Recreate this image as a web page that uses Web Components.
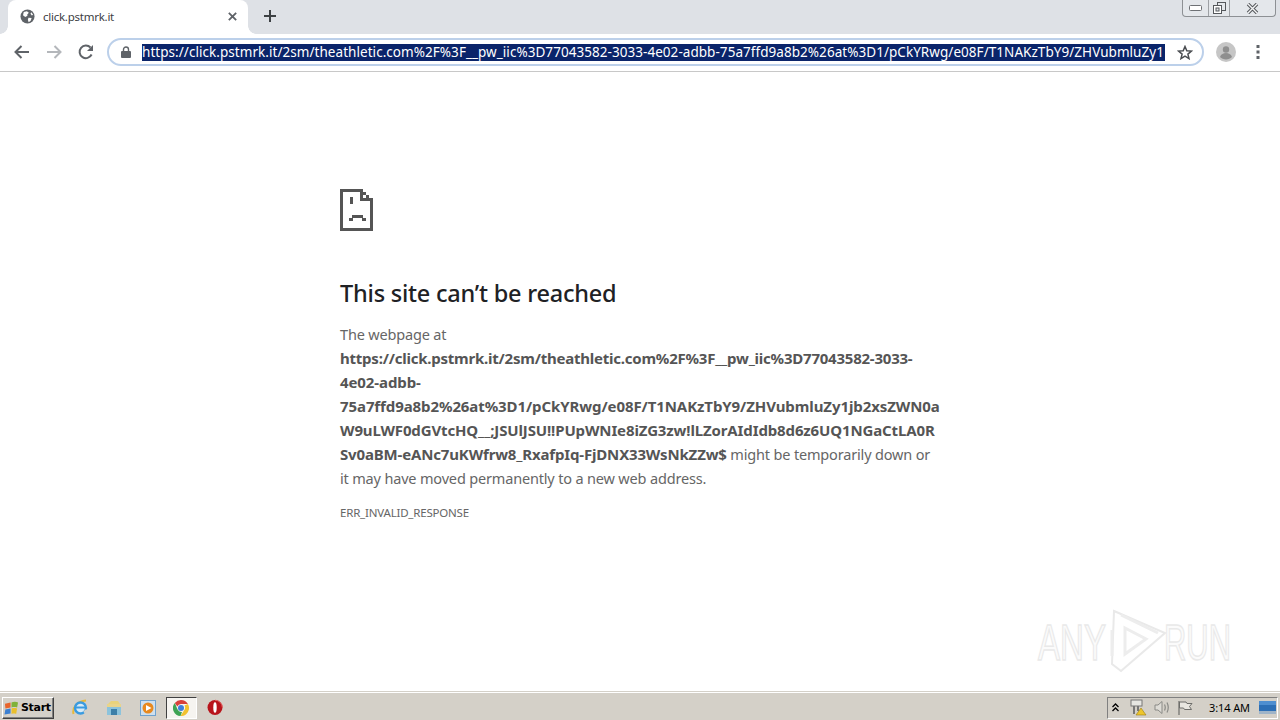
<!DOCTYPE html>
<html>
<head>
<meta charset="utf-8">
<title>click.pstmrk.it</title>
<style>
  html, body { margin: 0; height: 100%; background: #fff; }
  body { display: flex; flex-direction: column; height: 720px; overflow: hidden; font-family: "Noto Sans", "Open Sans", sans-serif; position: relative; }
</style>
</head>
<body>
<tab-strip title-text="click.pstmrk.it"></tab-strip>
<omni-toolbar url="https://click.pstmrk.it/2sm/theathletic.com%2F%3F__pw_iic%3D77043582-3033-4e02-adbb-75a7ffd9a8b2%26at%3D1/pCkYRwg/e08F/T1NAKzTbY9/ZHVubmluZy1"></omni-toolbar>
<error-page>
  <span slot="title">This site can’t be reached</span>
  <span slot="code">ERR_INVALID_RESPONSE</span>
</error-page>
<win-taskbar></win-taskbar>
<run-watermark></run-watermark>

<script>
  class TabStrip extends HTMLElement {
    constructor() {
      super();
      this.attachShadow({ mode: "open" });
      this.shadowRoot.innerHTML = `
        <style>
          :host { display: flex; height: 34px; background: #dee1e6; padding-left: 8px; flex: none; }
          .tab { position: relative; width: 240px; height: 34px; background: #fff; border-radius: 8px 8px 0 0; display: flex; align-items: center; padding: 0 10px 2px 12px; box-sizing: border-box; }
          .tab::before, .tab::after { content: ""; position: absolute; bottom: 0; width: 8px; height: 8px; }
          .tab::before { left: -8px; background: radial-gradient(circle at 0 0, transparent 7.5px, #fff 8px); }
          .tab::after { right: -8px; background: radial-gradient(circle at 100% 0, transparent 7.5px, #fff 8px); }
          .tab svg.globe { margin-right: 8px; flex: none; }
          .name { flex: 1; font: 11.5px "Noto Sans", sans-serif; color: #3c4043; letter-spacing: -.25px; }
          .add { margin: 0 0 2px 15px; align-self: center; display: flex; }
          .spacer { flex: 1; }
          .caption { display: flex; align-self: flex-start; height: 16px; margin-right: 4px; border: 1px solid #8d9094; border-top: 0; border-radius: 0 0 4px 4px; background: #e4e7eb; }
          .caption div { display: flex; align-items: center; justify-content: center; border-left: 1px solid #9ea1a5; }
          .caption div:first-child { border-left: 0; width: 25px; }
          .caption div:nth-child(2) { width: 20px; }
          .caption div:nth-child(3) { width: 45px; }
        </style>
        <div class="tab">
          <svg class="globe" width="15" height="15" viewBox="0 0 16 16"><circle cx="8" cy="8" r="7.5" fill="#5f6368"/><path d="M4 3.2 7.4 2.4 9.4 4 7.6 6 8 7.2 5.6 8.6 3.2 6.6ZM9 9.2 12.4 9.6 11.4 12.6 9.2 14 8.4 11.4Z" fill="#fff"/><path d="M12 3.5 14 6 12.6 6.8 11.2 5Z" fill="#fff"/></svg>
          <span class="name">${this.getAttribute("title-text")}</span>
          <svg width="11" height="11" viewBox="0 0 12 12"><path d="M2 2 10 10M10 2 2 10" stroke="#5f6368" stroke-width="2"/></svg>
        </div>
        <div class="add"><svg width="14" height="14" viewBox="0 0 14 14"><path d="M7 1V13M1 7H13" stroke="#3c4043" stroke-width="2"/></svg></div>
        <div class="spacer"></div>
        <div class="caption">
          <div><svg width="13" height="6" viewBox="0 0 13 6"><rect x=".5" y=".5" width="12" height="5" rx="1" fill="#fff" stroke="#6e7175"/></svg></div>
          <div><svg width="13" height="12" viewBox="0 0 13 12"><rect x="4.5" y=".5" width="8" height="8" fill="#e4e7eb" stroke="#55585c"/><rect x=".5" y="3.5" width="8" height="8" fill="#fff" stroke="#55585c"/><rect x="3" y="6" width="3" height="3" fill="#e4e7eb" stroke="#55585c"/></svg></div>
          <div><svg width="13" height="11" viewBox="0 0 13 11"><path d="M2 1 11 10M11 1 2 10" stroke="#55585c" stroke-width="3.4"/><path d="M2 1 11 10M11 1 2 10" stroke="#f4f5f6" stroke-width="1.4"/></svg></div>
        </div>`;
    }
  }
  customElements.define("tab-strip", TabStrip);

  class OmniToolbar extends HTMLElement {
    constructor() {
      super();
      this.attachShadow({ mode: "open" });
      this.shadowRoot.innerHTML = `
        <style>
          :host { display: flex; align-items: center; height: 38px; box-sizing: border-box; background: #fff; border-bottom: 1px solid #c8c8c8; flex: none; padding: 0 0 1px 14px; }
          .nav { display: flex; align-items: center; gap: 16px; margin-right: 14px; }
          .bar { width: 1097px; height: 28px; box-sizing: border-box; border: 2px solid #bcd0ea; border-radius: 14px; display: flex; align-items: center; padding-left: 12px; flex: none; margin-left: -1px; }
          .lock { margin-right: 11px; flex: none; }
          .sel { width: 1023px; flex: none; background: #0a246a; color: #fff; font: 13.5px/17px "Noto Sans", sans-serif; white-space: nowrap; letter-spacing: .05px; }
          .star { margin-left: 12px; flex: none; }
          .avatar { margin-left: 12px; flex: none; }
          .menu { margin-left: 20px; flex: none; }
        </style>
        <div class="nav">
          <svg width="16" height="14" viewBox="0 0 16 14"><path d="M15 7H2M7.5 1 1.5 7 7.5 13" fill="none" stroke="#5f6368" stroke-width="2"/></svg>
          <svg width="16" height="14" viewBox="0 0 16 14"><path d="M1 7H14M8.500 1 14.500 7 8.500 13" fill="none" stroke="#b4b7bb" stroke-width="2"/></svg>
          <svg width="16" height="16" viewBox="0 0 16 16"><path d="M13.600 10.500A6.300 6.300 0 1 1 12.500 3.500" fill="none" stroke="#5f6368" stroke-width="2"/><path d="M15 1V7H9Z" fill="#5f6368"/></svg>
        </div>
        <div class="bar">
          <svg class="lock" width="10" height="12" viewBox="0 0 10 12"><path d="M2.500 5V3.500a2.500 2.500 0 0 1 5 0V5" fill="none" stroke="#5f6368" stroke-width="1.400"/><rect y="5" width="10" height="7" rx="1" fill="#5f6368"/></svg>
          <div class="sel">${this.getAttribute("url")}</div>
          <svg class="star" width="16" height="15" viewBox="0 0 16 15"><path d="M8 1.500 9.800 5.800 14.500 6.100 10.900 9.100 12 13.600 8 11.200 4 13.600 5.100 9.100 1.500 6.100 6.200 5.800Z" fill="none" stroke="#4a4d51" stroke-width="1.500"/></svg>
        </div>
        <svg class="avatar" width="20" height="20" viewBox="0 0 20 20"><circle cx="10" cy="10" r="10" fill="#c6c6c6"/><circle cx="10" cy="7.500" r="3.200" fill="#8f8f8f"/><path d="M4 15c1-3 3.500-4 6-4s5 1 6 4c-1.500 1.600-3.600 2.500-6 2.500S5.500 16.600 4 15Z" fill="#8f8f8f"/></svg>
        <svg class="menu" width="4" height="14" viewBox="0 0 4 14"><rect x=".5" y="0" width="3" height="3" fill="#5f6368"/><rect x=".5" y="5.500" width="3" height="3" fill="#5f6368"/><rect x=".5" y="11" width="3" height="3" fill="#5f6368"/></svg>`;
    }
  }
  customElements.define("omni-toolbar", OmniToolbar);

  class ErrorPage extends HTMLElement {
    constructor() {
      super();
      this.attachShadow({ mode: "open" });
      this.shadowRoot.innerHTML = `
        <style>
          :host { display: block; flex: 1; min-height: 0; background: #fff; padding: 117px 340px 0; color: #666; font: 14.5px/24px "Noto Sans", sans-serif; box-sizing: border-box; }
          .icon { display: block; width: 33px; height: 42px; margin-bottom: 44px; }
          h1 { margin: 0 0 11px; font: 500 23.5px/36px "Noto Sans", sans-serif; color: #202124; letter-spacing: -.22px; }
          p { margin: 0; white-space: nowrap; letter-spacing: -.17px; }
          b { font-size: 15px; font-weight: 700; color: #555; letter-spacing: -.09px; }
          .first { letter-spacing: -.225px; }
          .fourth { letter-spacing: -.13px; }
          .fifth { letter-spacing: -.16px; }
          .code { margin-top: 13px; font-size: 11.5px; line-height: 20px; letter-spacing: -.2px; color: #666; }
        </style>
        <svg class="icon" viewBox="0 0 33 42" shape-rendering="crispEdges" fill="#555">
          <path d="M0 0H23V3H26V6H29V9H33V42H0ZM3 3V39H30V12H20V3ZM23 6V9H26V6Z" fill-rule="evenodd"/>
          <rect x="10" y="8" width="3" height="7"/>
          <rect x="12" y="26" width="11" height="3"/>
          <rect x="9" y="29" width="4" height="3"/>
          <rect x="22" y="29" width="4" height="3"/>
        </svg>
        <h1><slot name="title"></slot></h1>
        <p>The webpage at<br><b><span class="first">https://click.pstmrk.it/2sm/theathletic.com%2F%3F__pw_iic%3D77043582-3033-</span><br>4e02-adbb-<br>75a7ffd9a8b2%26at%3D1/pCkYRwg/e08F/T1NAKzTbY9/ZHVubmluZy1jb2xsZWN0a<br><span class="fourth">W9uLWF0dGVtcHQ__;JSUlJSU!!PUpWNIe8iZG3zw!lLZorAIdIdb8d6z6UQ1NGaCtLA0R</span><br><span class="fifth">Sv0aBM-eANc7uKWfrw8_RxafpIq-FjDNX33WsNkZZw$</span></b> might be temporarily down or<br>it may have moved permanently to a new web address.</p>
        <div class="code"><slot name="code"></slot></div>`;
    }
  }
  customElements.define("error-page", ErrorPage);

  class WinTaskbar extends HTMLElement {
    constructor() {
      super();
      this.attachShadow({ mode: "open" });
      this.shadowRoot.innerHTML = `
        <style>
          :host { display: flex; align-items: center; height: 28px; box-sizing: border-box; flex: none; background: #d4d0c8; border-top: 1px solid #fff; box-shadow: 0 -1px 0 #d4d0c8; padding: 2px 2px 0; }
          .start { display: flex; align-items: center; gap: 2px; width: 52px; height: 22px; box-sizing: border-box; padding-left: 1px; background: #d4d0c8; border: 1px solid; border-color: #fff #404040 #404040 #fff; box-shadow: inset -1px -1px 0 #808080; font: 700 11px "DejaVu Sans", sans-serif; letter-spacing: -.3px; color: #000; flex: none; }
          .apps { display: flex; align-items: center; margin-left: 10px; }
          .app { width: 33.5px; display: flex; justify-content: center; align-items: center; height: 22px; flex: none; }
          .app.on { background: #f6f4f0; width: 31px; margin: 0 1.250px; box-sizing: border-box; border: 1px solid; border-color: #404040 #fff #fff #404040; }
          .spacer { flex: 1; }
          .tray { display: flex; align-items: center; width: 171px; height: 22px; box-sizing: border-box; border: 1px solid; border-color: #808080 #fff #fff #808080; flex: none; padding-left: 4px; }
          .clock { font: 11px "Noto Sans", sans-serif; color: #000; margin-left: 16px; letter-spacing: -.1px; white-space: nowrap; }
          .tray svg { flex: none; }
          .tray .chev { margin-right: 11px; }
          .tray .ico { margin-right: 7px; }
          .tray .ico.last { margin-right: 0; }
          .tray .desk { margin-left: 9px; }
        </style>
        <div class="start">
          <svg width="15" height="14" viewBox="0 0 16 15"><path d="M1 3 7 1.500 7 7 1.500 8Z" fill="#e8642c"/><path d="M8 1.500C10 .5 13 .5 15 1.500L14 7C12 6.300 10 6.300 8 7Z" fill="#7fb23a"/><path d="M1.400 9 7 8V13.500L.5 14.500Z" fill="#3b7fd1"/><path d="M8 8C10 7.300 12 7.300 14 8L13 14C11.500 13.300 9.500 13.300 8 14Z" fill="#e9bf2d"/></svg>
          <span>Start</span>
        </div>
        <div class="apps">
          <div class="app"><svg width="17" height="17" viewBox="0 0 17 17"><path d="M1.500 15C0 9 5 2 14 1.500" fill="none" stroke="#e7b93c" stroke-width="2"/><circle cx="8.500" cy="9" r="5.500" fill="#d7ebf7" stroke="#3a9be0" stroke-width="2.400"/><path d="M4 8.500H13" stroke="#3a9be0" stroke-width="2"/><path d="M12 13.500 15 11" stroke="#d4d0c8" stroke-width="2.400"/></svg></div>
          <div class="app"><svg width="16" height="16" viewBox="0 0 16 16"><path d="M2 4 5 1H12L14 4Z" fill="#e8d27c"/><rect x="1" y="4" width="14" height="11" fill="#8cc3dc"/><rect x="1" y="4" width="14" height="3" fill="#e9d48a"/><rect x="5" y="9" width="6" height="6" fill="#3d7fa8"/></svg></div>
          <div class="app"><svg width="16" height="16" viewBox="0 0 16 16"><rect x=".5" y=".5" width="15" height="15" fill="#cfe0ee" stroke="#6fa2cf"/><circle cx="8" cy="8" r="5.500" fill="#e8891e"/><path d="M6 5 11.500 8 6 11Z" fill="#fff"/></svg></div>
          <div class="app on"><svg width="16" height="16" viewBox="0 0 16 16"><path d="M8 0a8 8 0 0 1 6.900 4H8a4 4 0 0 0-3.700 2.500L1.800 2.900A8 8 0 0 1 8 0Z" fill="#d8403a"/><path d="M14.900 4A8 8 0 0 1 7.500 16L11.300 10A4 4 0 0 0 11.500 5.500Z" fill="#f2c230"/><path d="M1.800 2.900 4.600 9.500A4 4 0 0 0 9 11.900L7.500 16A8 8 0 0 1 1.800 2.900Z" fill="#3ea354"/><circle cx="8" cy="8" r="3" fill="#3f7fdc"/></svg></div>
          <div class="app"><svg width="16" height="17" viewBox="0 0 16 17"><circle cx="8" cy="8.500" r="7.500" fill="#b8141b"/><path d="M8 1.200A7.300 7.300 0 0 1 15.300 8.500" fill="none" stroke="#e45f5f" stroke-width="1"/><ellipse cx="8" cy="8.500" rx="1.700" ry="5.300" fill="#fff"/></svg></div>
        </div>
        <div class="spacer"></div>
        <div class="tray">
          <svg class="chev" width="7" height="9" viewBox="0 0 7 9"><path d="M.5 4 3.500 1 6.500 4M.5 8 3.500 5 6.500 8" fill="none" stroke="#000" stroke-width="1.300"/></svg>
          <svg class="ico" width="17" height="17" viewBox="0 0 17 17"><rect x="1" y="1" width="11" height="6" fill="#e6e6e2" stroke="#777"/><path d="M4 7V15M8 7V12" stroke="#777" stroke-width="2"/><path d="M11 9 16 16H6Z" fill="#edc52d" stroke="#9a7d10" stroke-width=".6"/></svg>
          <svg class="ico" width="16" height="15" viewBox="0 0 16 15"><path d="M1 5H4L8 1.500V13.500L4 10H1Z" fill="#dedcd6" stroke="#8a8a86"/><path d="M10.500 4.500Q12 7.500 10.500 10.500M13 2.500Q15.500 7.500 13 12.500" fill="none" stroke="#8a8a86" stroke-width="1.200"/></svg>
          <svg class="ico last" width="16" height="16" viewBox="0 0 16 16"><path d="M2 1V15" stroke="#6d6d6a" stroke-width="1.200"/><path d="M2.500 2H9L10 3.500H15L12.500 6.500 14.500 9.500H7.500L6.500 8H2.500Z" fill="#e8e6e0" stroke="#6d6d6a"/></svg>
          <span class="clock">3:14 AM</span>
          <svg class="desk" width="17" height="13" viewBox="0 0 17 13"><rect width="17" height="11" fill="#2d6fb5"/><rect y="0" width="17" height="4" fill="#4f8fd0"/><rect y="10" width="17" height="3" fill="#9fb4c8"/></svg>
        </div>`;
    }
  }
  customElements.define("win-taskbar", WinTaskbar);

  // sits over the page, corner mark
  class RunWatermark extends HTMLElement {
    constructor() {
      super();
      this.attachShadow({ mode: "open" });
      this.shadowRoot.innerHTML = `
        <style>
          :host { display: block; position: absolute; left: 1036px; top: 604px; width: 244px; height: 72px; pointer-events: none; }
          text { font: 400 50px "Liberation Sans", sans-serif; fill: #fbfbfb; stroke: #e9e9e9; stroke-width: 1.500; }
        </style>
        <svg width="244" height="72" viewBox="0 0 244 72">
          <text x="2" y="56" textLength="68" lengthAdjust="spacingAndGlyphs">ANY</text>
          <text x="128" y="56" textLength="67" lengthAdjust="spacingAndGlyphs">RUN</text>
          <path d="M78 7 129 29 85 67 76 60Z" fill="none" stroke="#e9e9e9" stroke-width="2"/>
          <path d="M85 11 122 29M76 26V52M89 24 110 35 89 50Z" fill="none" stroke="#ededed" stroke-width="3"/>
        </svg>`;
    }
  }
  customElements.define("run-watermark", RunWatermark);
</script>
</body>
</html>
